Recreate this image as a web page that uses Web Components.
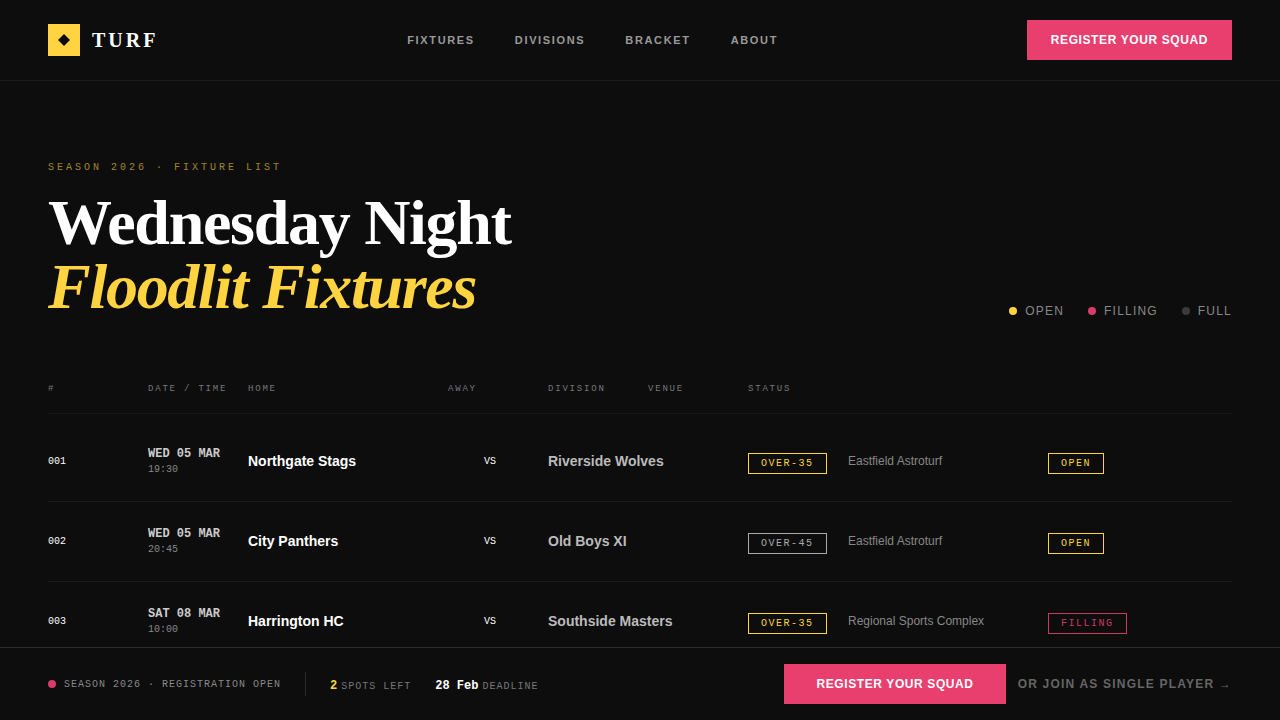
<!DOCTYPE html>
<html lang="en">
<head>
<meta charset="utf-8">
<meta name="viewport" content="width=device-width, initial-scale=1">
<title>TURF – Wednesday Night Floodlit Fixtures</title>
<style>
  :root {
    --bg: #0d0d0d;
    --yellow: #ffd440;
    --pink: #e83f6f;
    --line: #1c1c1c;
    --muted: #888;
    --gutter: 48px;
    --sans: "Liberation Sans", Arial, sans-serif;
    --serif: "Liberation Serif", "Times New Roman", serif;
    --mono: "Liberation Mono", "Courier New", monospace;
  }
  body { margin: 0; background: var(--bg); color: #fff; font-family: var(--sans); font-size: 16px; }
</style>
</head>
<body>
<turf-app>
  <site-header slot="header"></site-header>
  <page-hero>
    <span slot="eyebrow">SEASON 2026 · FIXTURE LIST</span>
    <span slot="title">Wednesday Night</span>
    <em slot="accent">Floodlit Fixtures</em>
    <status-legend slot="aside"></status-legend>
  </page-hero>
  <fixture-table></fixture-table>
  <action-bar slot="footer"></action-bar>
</turf-app>

<script>
const define = (name, html, setup) => {
  const template = document.createElement('template');
  template.innerHTML = html;
  customElements.define(name, class extends HTMLElement {
    constructor() {
      super();
      this.attachShadow({ mode: 'open' }).append(template.content.cloneNode(true));
      if (setup) setup(this.shadowRoot);
    }
  });
};

define('cta-button', `
  <style>
    :host { display: block; flex: none; }
    button {
      display: block; height: 40px; padding: 0 var(--cta-padding, 24px);
      border: 0; border-radius: 0; background: var(--pink); color: #fff;
      font: bold 12px/16px var(--sans); letter-spacing: 0.05em; white-space: nowrap; cursor: pointer;
    }
  </style>
  <button type="button"><slot></slot></button>`);

define('status-dot', `
  <style>
    :host { display: block; flex: none; width: 8px; height: 8px; border-radius: 50%; background: var(--yellow); }
    :host([tone="pink"]) { background: #d93b6a; }
    :host([tone="grey"]) { background: #3c3a3b; }
  </style>`);

define('outline-tag', `
  <style>
    :host {
      display: inline-block; padding: 4px 12px; border: 1px solid; color: var(--yellow);
      font: 10px/11px var(--mono); letter-spacing: 0.15em; white-space: nowrap;
    }
    :host([tone="pink"]) { color: #c93a63; }
    :host([tone="grey"]) { color: #aaa; }
  </style>
  <slot></slot>`);

define('brand-logo', `
  <style>
    :host { display: block; }
    a { display: flex; align-items: center; gap: 12px; color: #fff; text-decoration: none;
        font: bold 20px/24px var(--serif); letter-spacing: 0.15em; }
    svg { display: block; width: 32px; height: 32px; background: var(--yellow); }
  </style>
  <a href="#home">
    <svg viewBox="0 0 32 32" aria-hidden="true"><path d="M16 10l6 6-6 6-6-6z" fill="#0d0d0d"/></svg>
    <span>TURF</span>
  </a>`);

define('site-header', `
  <style>
    :host { display: block; border-bottom: 1px solid var(--line); }
    header { display: flex; align-items: center; justify-content: space-between; padding: 20px var(--gutter); }
    nav { display: flex; gap: 40px; }
    nav a { color: #999; text-decoration: none; font: bold 11px/16px var(--sans); letter-spacing: 0.15em; }
  </style>
  <header>
    <brand-logo></brand-logo>
    <nav aria-label="Main">
      <a href="#fixtures">FIXTURES</a>
      <a href="#divisions">DIVISIONS</a>
      <a href="#bracket">BRACKET</a>
      <a href="#about">ABOUT</a>
    </nav>
    <cta-button>REGISTER YOUR SQUAD</cta-button>
  </header>`);

define('status-legend', `
  <style>
    :host { display: block; }
    ul { display: flex; gap: 24px; margin: 0; padding: 0; list-style: none; }
    li { display: flex; align-items: center; gap: 8px; color: var(--muted);
         font: 12px/16px var(--sans); letter-spacing: 0.1em; }
  </style>
  <ul>
    <li><status-dot></status-dot>OPEN</li>
    <li><status-dot tone="pink"></status-dot>FILLING</li>
    <li><status-dot tone="grey"></status-dot>FULL</li>
  </ul>`);

define('page-hero', `
  <style>
    :host { display: flex; align-items: flex-end; justify-content: space-between; gap: 32px; }
    p { margin: 0 0 16px; color: var(--yellow); opacity: 0.6; font: 10px/14px var(--mono); letter-spacing: 0.3em; }
    h1 { margin: 0; font: bold 64px/64px var(--serif); letter-spacing: -0.02em; }
    ::slotted([slot="title"]), ::slotted([slot="accent"]) { display: block; }
    ::slotted([slot="accent"]) { color: var(--yellow); font-style: italic; }
  </style>
  <div>
    <p><slot name="eyebrow"></slot></p>
    <h1><slot name="title"></slot><slot name="accent"></slot></h1>
  </div>
  <slot name="aside"></slot>`);

const fixtures = [
  { no: '001', date: 'WED 05 MAR', time: '19:30', home: 'Northgate Stags', away: 'Riverside Wolves',
    division: 'OVER-35', divisionTone: 'yellow', venue: 'Eastfield Astroturf', status: 'OPEN', statusTone: 'yellow' },
  { no: '002', date: 'WED 05 MAR', time: '20:45', home: 'City Panthers', away: 'Old Boys XI',
    division: 'OVER-45', divisionTone: 'grey', venue: 'Eastfield Astroturf', status: 'OPEN', statusTone: 'yellow' },
  { no: '003', date: 'SAT 08 MAR', time: '10:00', home: 'Harrington HC', away: 'Southside Masters',
    division: 'OVER-35', divisionTone: 'yellow', venue: 'Regional Sports Complex', status: 'FILLING', statusTone: 'pink' },
];

define('fixture-table', `
  <style>
    :host { display: block; }
    table, thead, tbody { display: block; }
    tr { display: grid; grid-template-columns: repeat(12, minmax(0, 1fr)); column-gap: 16px;
         align-items: center; border-bottom: 1px solid var(--line); }
    thead tr { padding-bottom: 17px; border-color: #171717; }
    tbody { padding-top: 8px; }
    tbody tr { height: 79px; }
    th, td { padding: 0; text-align: left; white-space: nowrap; }
    td { line-height: 22px; }
    th { color: #777; font: 9px/13px var(--mono); letter-spacing: 0.2em; }
    .wide { grid-column: span 2; }
    .no, .vs { font: 10px/12px var(--mono); }
    .vs { text-align: center; }
    .date { display: block; color: #ccc; font: bold 12px/14px var(--mono); }
    .time { display: block; margin-top: 2px; color: var(--muted); font: 10px/13px var(--mono); }
    .home, .away { font: bold 14px/17px var(--sans); }
    .away { color: #bbb; }
    .venue { color: var(--muted); font: 12px/15px var(--sans); }
  </style>
  <table>
    <thead>
      <tr>
        <th scope="col">#</th><th scope="col">DATE / TIME</th><th scope="col" class="wide">HOME</th>
        <th scope="col">AWAY</th><th scope="col">DIVISION</th><th scope="col">VENUE</th><th scope="col">STATUS</th>
      </tr>
    </thead>
    <tbody></tbody>
  </table>`, root => {
  root.querySelector('tbody').innerHTML = fixtures.map(f => `
    <tr>
      <td class="no">${f.no}</td>
      <td><span class="date">${f.date}</span><span class="time">${f.time}</span></td>
      <td class="home wide">${f.home}</td>
      <td class="vs">VS</td>
      <td class="away wide">${f.away}</td>
      <td><outline-tag tone="${f.divisionTone}">${f.division}</outline-tag></td>
      <td class="venue wide">${f.venue}</td>
      <td class="wide"><outline-tag tone="${f.statusTone}">${f.status}</outline-tag></td>
    </tr>`).join('');
});

define('stat-item', `
  <style>
    :host { display: block; white-space: nowrap; color: #777; }
    .value { margin-right: 4px; color: #fff; font: bold 12px/14px var(--mono); }
    :host([tone="yellow"]) .value { color: var(--yellow); }
    .label { font: 10px/12px var(--mono); letter-spacing: 0.1em; }
  </style>
  <span class="value"><slot name="value"></slot></span><span class="label"><slot></slot></span>`);

define('action-bar', `
  <style>
    :host { display: block; border-top: 1px solid #2e2e2e; background: var(--bg); }
    footer, .info, .actions, .season { display: flex; align-items: center; }
    footer { justify-content: space-between; gap: 24px; padding: 16px var(--gutter); }
    .info { gap: 24px; }
    .season { gap: 8px; color: var(--muted); font: 10px/13px var(--mono); letter-spacing: 0.1em; white-space: nowrap; }
    .rule { width: 1px; height: 24px; background: #2a2a2a; }
    .actions { gap: 12px; --cta-padding: 32px; }
    a { color: #666; text-decoration: none; font: bold 12px/16px var(--sans); letter-spacing: 0.1em; white-space: nowrap; }
  </style>
  <footer>
    <div class="info">
      <div class="season"><status-dot tone="pink"></status-dot>SEASON 2026 · REGISTRATION OPEN</div>
      <div class="rule"></div>
      <stat-item tone="yellow"><span slot="value">2</span>SPOTS LEFT</stat-item>
      <stat-item><span slot="value">28 Feb</span>DEADLINE</stat-item>
    </div>
    <div class="actions">
      <cta-button>REGISTER YOUR SQUAD</cta-button>
      <a href="#join">OR JOIN AS SINGLE PLAYER →</a>
    </div>
  </footer>`);

define('turf-app', `
  <style>
    :host { display: flex; flex-direction: column; height: 100vh; }
    main { flex: 1; min-height: 0; overflow-y: auto; scrollbar-width: none;
           display: flex; flex-direction: column; gap: 64px; box-sizing: border-box; padding: 80px var(--gutter) 0; }
    ::slotted(*) { flex: none; }
  </style>
  <slot name="header"></slot>
  <main><slot></slot></main>
  <slot name="footer"></slot>`);
</script>
</body>
</html>
